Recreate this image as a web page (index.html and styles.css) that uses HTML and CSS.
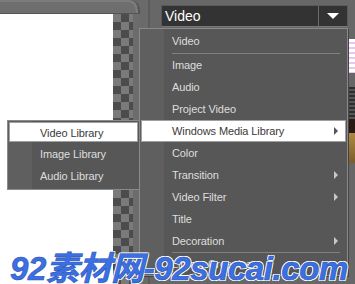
FILE: index.html
```html
<!DOCTYPE html>
<html lang="en">
<head>
    <meta charset="UTF-8">
    <title>Media Library Menu</title>
    <link rel="stylesheet" href="styles.css">
</head>
<body>
    <div class="app">
        <div class="stage">
            <div class="stage-top"></div>
            <div class="stage-body">
                <div class="preview"></div>
                <div class="checker"></div>
                <div class="dots"></div>
            </div>
        </div>
        <div class="side">
            <div class="combo">
                <span class="combo-text">Video</span>
                <span class="combo-btn"><span class="tri-down"></span></span>
            </div>
            <div class="thumbs">
                <div class="thumb t1"></div>
                <div class="thumb t2"></div>
                <div class="thumb t3"></div>
                <div class="thumb t4"></div>
            </div>
        </div>

        <!-- main dropdown -->
        <ul class="menu main-menu">
            <li class="item">Video</li>
            <li class="sep"></li>
            <li class="item">Image</li>
            <li class="item">Audio</li>
            <li class="item">Project Video</li>
            <li class="item active has-sub">Windows Media Library</li>
            <li class="item">Color</li>
            <li class="item has-sub">Transition</li>
            <li class="item has-sub">Video Filter</li>
            <li class="item">Title</li>
            <li class="item has-sub">Decoration</li>
            <li class="sep"></li>
            <li class="item">Library Organizer</li>
        </ul>

        <!-- submenu -->
        <ul class="menu sub-menu">
            <li class="item active">Video Library</li>
            <li class="item">Image Library</li>
            <li class="item">Audio Library</li>
        </ul>

        <div class="watermark">92素材网-92sucai.com</div>
    </div>
</body>
</html>
```
FILE: styles.css
```css
* {
    box-sizing: border-box;
    margin: 0;
    padding: 0;
}

body {
    background-color: #6a6a6a;
    font-family: 'Liberation Sans', Arial, sans-serif;
    overflow: hidden;
}

.app {
    position: relative;
    width: 355px;
    height: 284px;
    display: flex;
    overflow: hidden;
}

.stage {
    width: 150px;
    display: flex;
    flex-direction: column;
    border-right: 2px solid #5c5c5c;
}

.stage-top {
    height: 14px;
    background-color: #6e6e6e;
    border-bottom: 1px solid #555;
    border-right: 2px solid #555;
    border-top-right-radius: 10px;
    margin-right: 8px;
    box-shadow: inset -2px 2px 0 #7c7c7c;
}

.stage-body {
    flex: 1;
    display: flex;
}

.preview {
    width: 113px;
    background-color: #fff;
}

.checker {
    width: 20px;
    background-color: #7a7a7a;
    background-image: conic-gradient(#4c4c4c 25%, transparent 0 50%, #4c4c4c 0 75%, transparent 0);
    background-size: 16px 16px;
}

.dots {
    width: 7px;
    background-color: #6c6c6c;
    background-image: radial-gradient(#3e3e3e 40%, transparent 45%);
    background-size: 2px 2px;
}

.side {
    flex: 1;
    display: flex;
    flex-direction: column;
    padding: 5px 0 0 11px;
    background-color: #676767;
}

.combo {
    width: 187px;
    height: 22px;
    display: flex;
    background-color: #333;
    border: 1px solid #5a5a5a;
    border-bottom-color: #777;
}

.combo-text {
    flex: 1;
    color: #fff;
    font-size: 14px;
    line-height: 20px;
    padding-left: 3px;
}

.combo-btn {
    width: 29px;
    border-left: 1px solid #6a6a6a;
    display: flex;
    align-items: center;
    justify-content: center;
}

.tri-down {
    width: 0;
    height: 0;
    border-left: 6px solid transparent;
    border-right: 6px solid transparent;
    border-top: 6px solid #fff;
}

.thumbs {
    align-self: flex-end;
    width: 7px;
    display: flex;
    flex-direction: column;
    margin-top: 12px;
}

.thumb {
    width: 7px;
}

.t1 {
    height: 34px;
    background: repeating-linear-gradient(#fff 0 3px, #e8c8f0 3px 5px);
}

.t2 {
    height: 32px;
    margin-top: 14px;
    background: repeating-linear-gradient(#2e2e2e 0 2px, #555 2px 4px);
}

.t3 {
    height: 14px;
    background-color: #2a1a14;
}

.t4 {
    height: 30px;
    background: linear-gradient(#b08a40, #7a5c2a);
}

/* menus */
.menu {
    position: absolute;
    list-style: none;
    background-color: #575757;
    background-image: linear-gradient(to right, #5f5f5f 24px, transparent 24px);
    border: 1px solid #8a8a8a;
    padding: 1px;
    color: #dedede;
    font-size: 11px;
    letter-spacing: -0.1px;
}

.main-menu {
    left: 139px;
    top: 28px;
    width: 209px;
    height: 248px;
    box-shadow: 1px 1px 0 #444;
}

.sub-menu {
    left: 7px;
    top: 120px;
    width: 133px;
    height: 70px;
}

.item {
    position: relative;
    height: 22px;
    line-height: 22px;
    padding-left: 31px;
    white-space: nowrap;
}

.sep {
    height: 1px;
    margin: 0 6px 0 31px;
    background-color: #808080;
}

.main-menu .item:first-child {
    height: 23px;
}

.sub-menu .item.active {
    height: 20px;
    line-height: 20px;
    margin-bottom: 1px;
}

.item.active {
    background-color: #fff;
    color: #3a3a3a;
    border: 1px solid #a0a0a0;
    line-height: 20px;
    padding-left: 30px;
}

.has-sub::after {
    content: '';
    position: absolute;
    right: 8px;
    top: 7px;
    width: 0;
    height: 0;
    border-top: 4px solid transparent;
    border-bottom: 4px solid transparent;
    border-left: 4px solid #c8c8c8;
}

.item.active.has-sub::after {
    top: 6px;
    right: 7px;
    border-left-color: #555;
}

.watermark {
    position: absolute;
    left: 10px;
    top: 251px;
    font-family: 'Liberation Sans', 'Noto Sans CJK SC', sans-serif;
    font-size: 33px;
    line-height: 36px;
    font-weight: bold;
    font-style: italic;
    color: #3c6fe2;
    letter-spacing: -0.4px;
    -webkit-text-stroke: 0.6px #2a55b8;
    text-shadow: 1px 0 0 #fff, -1px 0 0 #fff, 0 1px 0 #fff, 0 -1px 0 #fff,
                 1px 1px 0 #fff, -1px -1px 0 #fff, 1px -1px 0 #fff, -1px 1px 0 #fff;
    white-space: nowrap;
}
```
